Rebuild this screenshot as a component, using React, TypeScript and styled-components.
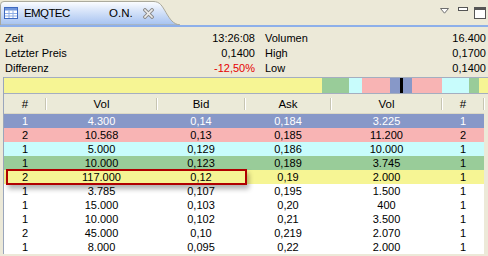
import styled, { createGlobalStyle } from "styled-components";

type Tone = "blue" | "pink" | "cyan" | "green" | "yellow" | "white";

interface Quote {
    n1: number;
    vol: string;
    bid: string;
    ask: string;
    vol2: string;
    n2: number;
    tone: Tone;
    marked?: boolean;
}

const TONES: Record<Tone, string> = {
    blue: "#8798C8",
    pink: "#F8B4B4",
    cyan: "#C8FCFC",
    green: "#99CC99",
    yellow: "#F6F594",
    white: "#FFFFFF",
};

const quotes: Quote[] = [
    { n1: 1, vol: "4.300", bid: "0,14", ask: "0,184", vol2: "3.225", n2: 1, tone: "blue" },
    { n1: 2, vol: "10.568", bid: "0,13", ask: "0,185", vol2: "11.200", n2: 2, tone: "pink" },
    { n1: 1, vol: "5.000", bid: "0,129", ask: "0,186", vol2: "10.000", n2: 1, tone: "cyan" },
    { n1: 1, vol: "10.000", bid: "0,123", ask: "0,189", vol2: "3.745", n2: 1, tone: "green" },
    { n1: 2, vol: "117.000", bid: "0,12", ask: "0,19", vol2: "2.000", n2: 1, tone: "yellow", marked: true },
    { n1: 1, vol: "3.785", bid: "0,107", ask: "0,195", vol2: "1.500", n2: 1, tone: "white" },
    { n1: 1, vol: "15.000", bid: "0,103", ask: "0,20", vol2: "400", n2: 1, tone: "white" },
    { n1: 1, vol: "10.000", bid: "0,102", ask: "0,21", vol2: "3.500", n2: 1, tone: "white" },
    { n1: 2, vol: "45.000", bid: "0,10", ask: "0,219", vol2: "2.070", n2: 1, tone: "white" },
    { n1: 1, vol: "8.000", bid: "0,095", ask: "0,22", vol2: "2.000", n2: 1, tone: "white" },
];

// depth strip segments, left to right
const strip: { tone: Tone; width: number; marker?: boolean }[] = [
    { tone: "yellow", width: 318 },
    { tone: "green", width: 27 },
    { tone: "cyan", width: 13 },
    { tone: "pink", width: 28 },
    { tone: "blue", width: 22, marker: true },
    { tone: "pink", width: 30 },
    { tone: "cyan", width: 27 },
    { tone: "green", width: 10 },
    { tone: "yellow", width: 9 },
];

const App = () => {
    return (
        <>
            <GlobalStyle />
            <Frame>
                <TabBar>
                    <Tab>
                        <TabShape viewBox="0 0 180 25" preserveAspectRatio="none">
                            <defs>
                                <linearGradient id="tabGrad" x1="0" y1="0" x2="0" y2="1">
                                    <stop offset="0" stopColor="#FDFEFF" />
                                    <stop offset="0.35" stopColor="#DCE7FA" />
                                    <stop offset="1" stopColor="#A5C2F0" />
                                </linearGradient>
                            </defs>
                            <path
                                d="M0.5,25 L0.5,4 Q0.5,0.5 4,0.5 L153,0.5 C160,0.5 162,5 166,12 C170,19 173,24 180,25 Z"
                                fill="url(#tabGrad)"
                                stroke="#A7A69A"
                                strokeWidth="1"
                            />
                        </TabShape>
                        <TableIcon width="14" height="12" viewBox="0 0 14 12">
                            <rect x="0.5" y="0.5" width="13" height="11" fill="#FFFFFF" stroke="#3E69C0" />
                            <rect x="1" y="1" width="12" height="2.5" fill="#6F95DC" />
                            <path d="M1 6.5 H13 M1 9 H13 M5 3.5 V11 M9 3.5 V11" stroke="#8FAEE6" strokeWidth="1" />
                        </TableIcon>
                        <TabTitle>EMQTEC</TabTitle>
                        <TabSub>O.N.</TabSub>
                        <CloseIcon width="11" height="11" viewBox="0 0 11 11">
                            <path d="M2 2 L9 9 M9 2 L2 9" stroke="#8B8B8B" strokeWidth="3.6" strokeLinecap="square" />
                            <path d="M2 2 L9 9 M9 2 L2 9" stroke="#EDEDED" strokeWidth="1.6" strokeLinecap="square" />
                        </CloseIcon>
                    </Tab>
                    <ViewTools>
                        <svg width="9" height="6" viewBox="0 0 9 6">
                            <path d="M0.5 0.5 H8.5 L4.5 5.2 Z" fill="#FFFFFF" stroke="#6E6E6E" strokeWidth="1" />
                        </svg>
                        <svg width="10" height="4" viewBox="0 0 10 4">
                            <rect x="0.5" y="0.5" width="9" height="3" fill="#FFFFFF" stroke="#555" />
                        </svg>
                        <svg width="12" height="12" viewBox="0 0 12 12">
                            <rect x="0.5" y="0.5" width="11" height="11" fill="#FFFFFF" stroke="#555" />
                            <rect x="1" y="1" width="10" height="2" fill="#555" />
                        </svg>
                    </ViewTools>
                </TabBar>

                <Info>
                    <InfoPair>
                        <span>Zeit</span>
                        <span>13:26:08</span>
                    </InfoPair>
                    <InfoPair>
                        <span>Volumen</span>
                        <span>16.400</span>
                    </InfoPair>
                    <InfoPair>
                        <span>Letzter Preis</span>
                        <span>0,1400</span>
                    </InfoPair>
                    <InfoPair>
                        <span>High</span>
                        <span>0,1700</span>
                    </InfoPair>
                    <InfoPair>
                        <span>Differenz</span>
                        <Change>-12,50%</Change>
                    </InfoPair>
                    <InfoPair>
                        <span>Low</span>
                        <span>0,1400</span>
                    </InfoPair>
                </Info>

                <Panel>
                    <Strip>
                        {strip.map((s, i) => (
                            <Segment key={i} $tone={s.tone} style={{ width: s.width }}>
                                {s.marker && <Marker />}
                            </Segment>
                        ))}
                    </Strip>

                    <Grid>
                        <HeadRow>
                            <HeadCell>#</HeadCell>
                            <HeadCell>Vol</HeadCell>
                            <HeadCell>Bid</HeadCell>
                            <HeadCell>Ask</HeadCell>
                            <HeadCell>Vol</HeadCell>
                            <HeadCell>#</HeadCell>
                        </HeadRow>
                        {quotes.map((q, i) => (
                            <Row key={i} $tone={q.tone}>
                                <Cell>{q.n1}</Cell>
                                <Cell>{q.vol}</Cell>
                                <Cell>{q.bid}</Cell>
                                <Cell>{q.ask}</Cell>
                                <Cell>{q.vol2}</Cell>
                                <Cell>{q.n2}</Cell>
                                {q.marked && <Highlight />}
                            </Row>
                        ))}
                    </Grid>
                </Panel>
            </Frame>
        </>
    );
};

const GlobalStyle = createGlobalStyle`
    html, body {
        margin: 0;
        padding: 0;
        background: #ECE9D8;
    }
    body {
        font-family: "Liberation Sans", Arial, sans-serif;
        font-size: 11px;
        color: #000;
    }
`;

const Frame = styled.div`
    width: 488px;
    height: 256px;
    overflow: hidden;
    display: flex;
    flex-direction: column;
    background: #ECE9D8;
`;

const TabBar = styled.div`
    flex: none;
    height: 25px;
    display: flex;
    align-items: flex-start;
    justify-content: space-between;
    border-bottom: 2px solid #8DAFEA;
`;

const Tab = styled.div`
    position: relative;
    width: 180px;
    height: 24px;
    margin-top: 1px;
    display: flex;
    align-items: center;
    padding-left: 4px;
    box-sizing: border-box;
`;

const TabShape = styled.svg`
    position: absolute;
    left: 0;
    top: 0;
    width: 180px;
    height: 24px;
    z-index: 0;
`;

const TableIcon = styled.svg`
    position: relative;
    flex: none;
    margin-right: 6px;
`;

const TabTitle = styled.span`
    position: relative;
    width: 85px;
    font-size: 11.5px;
    letter-spacing: -0.6px;
`;

const TabSub = styled.span`
    position: relative;
    font-size: 11.5px;
`;

const CloseIcon = styled.svg`
    position: relative;
    margin-left: 10px;
    margin-top: 1px;
`;

const ViewTools = styled.div`
    display: flex;
    align-items: flex-start;
    gap: 6px;
    padding-top: 7px;
    padding-right: 2px;

    & svg:first-child {
        margin-top: 1px;
        margin-right: 3px;
    }
`;

const Info = styled.div`
    flex: none;
    display: grid;
    grid-template-columns: 250px 1fr;
    column-gap: 10px;
    grid-auto-rows: 15px;
    padding: 4px 2px 0 5px;
    height: 50px;
    box-sizing: border-box;
`;

const InfoPair = styled.div`
    display: flex;
    justify-content: space-between;
    align-items: center;
    line-height: 15px;
`;

const Change = styled.span`
    color: #E60000;
`;

const Panel = styled.div`
    margin-left: 3px;
    width: 482px;
    border-left: 1px solid #9AA6BC;
    display: flex;
    flex-direction: column;
`;

const Strip = styled.div`
    flex: none;
    display: flex;
    height: 15px;
    border-top: 1px solid #A4AEC0;
    border-bottom: 1px solid #A4AEC0;
    width: 505px;
`;

const Segment = styled.div<{ $tone: Tone }>`
    flex: none;
    height: 100%;
    background: ${(p) => TONES[p.$tone]};
    display: flex;
    justify-content: center;
`;

const Marker = styled.div`
    width: 3px;
    height: 100%;
    background: #000;
`;

const Grid = styled.div`
    margin-top: 1px;
    display: flex;
    flex-direction: column;
    width: 480px;
    background: #FFFFFF;
`;

const columns = "42px 111px 88px 86px 111px 42px";

const HeadRow = styled.div`
    flex: none;
    display: grid;
    grid-template-columns: ${columns};
    height: 19px;
    background: #EBEAD8;
    border-bottom: 1px solid #DCD9C6;
    box-sizing: border-box;
`;

const HeadCell = styled.div`
    position: relative;
    display: flex;
    align-items: center;
    justify-content: center;
    font-size: 11.5px;

    &::after {
        content: "";
        position: absolute;
        right: 0;
        top: 3px;
        bottom: 3px;
        width: 1px;
        background: #C7C5B2;
        box-shadow: 1px 0 0 #FFFFFF;
    }
`;

const Row = styled.div<{ $tone: Tone }>`
    flex: none;
    position: relative;
    display: grid;
    grid-template-columns: ${columns};
    height: 14px;
    background: ${(p) => TONES[p.$tone]};
    color: ${(p) => (p.$tone === "blue" ? "#FFFFFF" : "#000000")};
`;

const Cell = styled.div`
    display: flex;
    align-items: center;
    justify-content: center;
    padding-top: 1px;
    box-sizing: border-box;
    line-height: 13px;
    font-size: 11px;
`;

const Highlight = styled.div`
    position: absolute;
    left: 2px;
    top: -1px;
    width: 241px;
    height: 16px;
    box-sizing: border-box;
    border: 2px solid #B00000;
    box-shadow: 2px 4px 5px rgba(0, 0, 0, 0.3);
    z-index: 1;
`;

export default App;
